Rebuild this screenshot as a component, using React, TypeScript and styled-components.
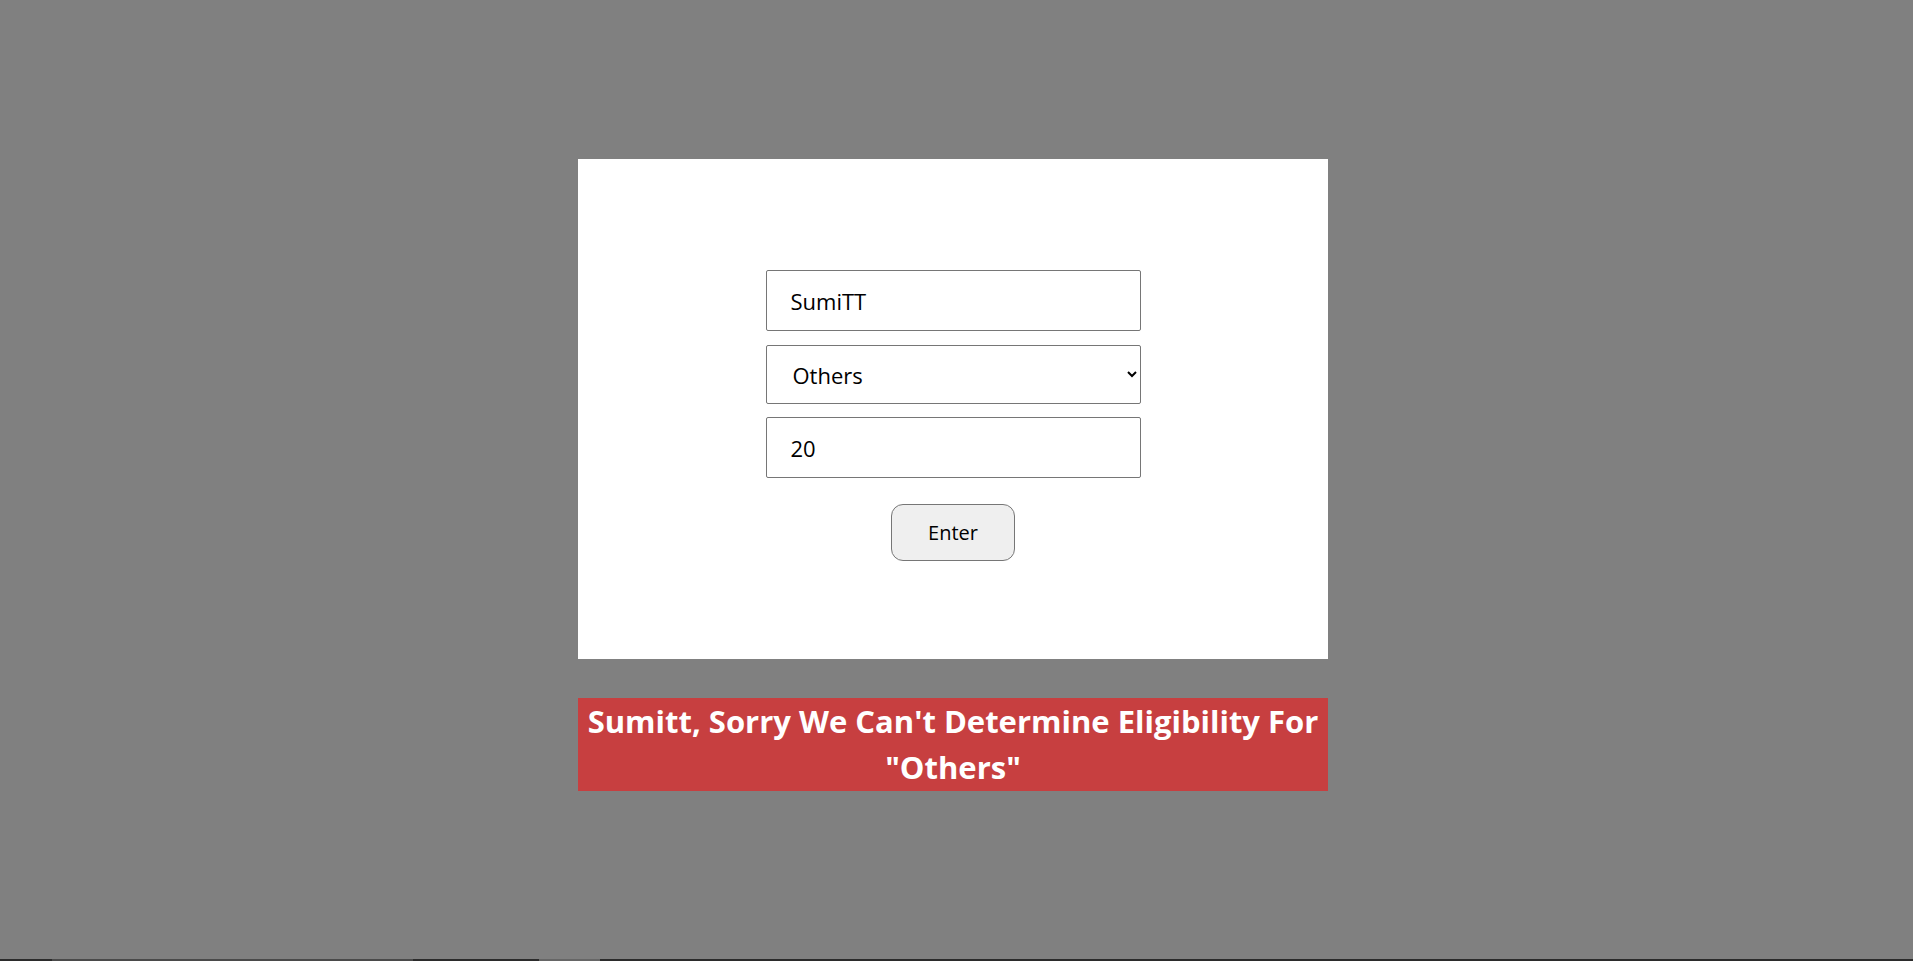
import React, { useState } from "react";
import styled, { createGlobalStyle } from "styled-components";

const GlobalStyle = createGlobalStyle`
	html, body {
		margin: 0;
		padding: 0;
		background: #808080;
		font-family: "Open Sans", "Liberation Sans", sans-serif;
	}
`;

const Page = styled.div`
	min-height: 100vh;
	display: flex;
	flex-direction: column;
	box-sizing: border-box;
`;

const Main = styled.main`
	flex: 1;
	display: flex;
	flex-direction: column;
	align-items: center;
	padding-top: 159px;
	padding-right: 7px;
	gap: 39px;
`;

const Card = styled.form`
	width: 750px;
	height: 500px;
	box-sizing: border-box;
	background: #ffffff;
	display: flex;
	flex-direction: column;
	align-items: center;
	padding-top: 111px;
`;

const Field = styled.input`
	width: 375px;
	height: 61px;
	box-sizing: border-box;
	border: 1px solid #767676;
	border-radius: 2px;
	padding: 0 24px;
	font-family: inherit;
	font-size: 22px;
	color: #000;
	outline: none;
`;

const Select = styled.select`
	width: 375px;
	height: 59px;
	box-sizing: border-box;
	border: 1px solid #767676;
	border-radius: 2px;
	padding: 0 8px 0 22px;
	margin: 14px 0 13px;
	font-family: inherit;
	font-size: 22px;
	color: #000;
	background: #fff;
	outline: none;
`;

const EnterButton = styled.button`
	margin-top: 26px;
	width: 124px;
	height: 57px;
	border: 1px solid #767676;
	border-radius: 12px;
	background: #efefef;
	font-family: inherit;
	font-size: 20px;
	font-weight: 500;
	color: #000;
	cursor: pointer;
`;

const Banner = styled.div`
	width: 750px;
	box-sizing: border-box;
	background: #c73f40;
	color: #ffffff;
	text-align: center;
	font-weight: 700;
	font-size: 31px;
	line-height: 46px;
	padding: 0 0 1px;
`;

const BottomBar = styled.div`
	height: 2px;
	background: #2b2b2b;
	display: flex;
`;

const BarSegment = styled.div<{ $w: number; $left: number; $tone: string }>`
	margin-left: ${(p) => p.$left}px;
	width: ${(p) => p.$w}px;
	background: ${(p) => p.$tone};
`;

export default function App() {
	const [name, setName] = useState("SumiTT");
	const [group, setGroup] = useState("Others");
	const [age, setAge] = useState("20");

	return (
		<Page>
			<GlobalStyle />
			<Main>
				<Card onSubmit={(e) => e.preventDefault()}>
					<Field value={name} onChange={(e) => setName(e.target.value)} />
					<Select value={group} onChange={(e) => setGroup(e.target.value)}>
						<option>Students</option>
						<option>Employees</option>
						<option>Others</option>
					</Select>
					<Field value={age} onChange={(e) => setAge(e.target.value)} />
					<EnterButton type="submit">Enter</EnterButton>
				</Card>
				<Banner>Sumitt, Sorry We Can't Determine Eligibility For "Others"</Banner>
			</Main>
			<BottomBar>
				<BarSegment $left={52} $w={361} $tone="#4a4a4a" />
				<BarSegment $left={126} $w={61} $tone="#666666" />
			</BottomBar>
		</Page>
	);
}
